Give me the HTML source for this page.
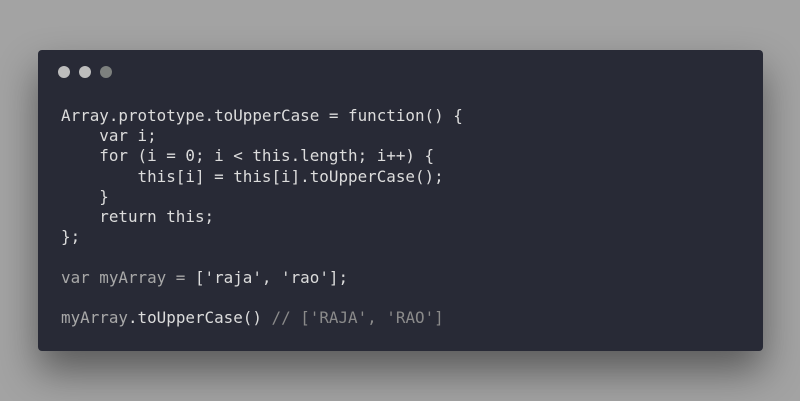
<!DOCTYPE html>
<html><head><style>
html,body{margin:0;padding:0;}
body{width:800px;height:401px;background:#a3a3a3;position:relative;overflow:hidden;}
.card{position:absolute;left:38px;top:50px;width:725px;height:301px;background:#282a36;border-radius:4px;box-shadow:0 20px 40px rgba(0,0,0,0.45);}
.dot{position:absolute;top:66px;width:12px;height:12px;border-radius:50%;}
pre{position:absolute;left:61px;top:106px;margin:0;font-family:"DejaVu Sans Mono","Liberation Mono",monospace;font-size:15.9px;line-height:20.2px;color:#dcdcdc;}
.g{color:#a8a8a8}
.c{color:#8a8a8a}
</style></head><body>
<div class="card"></div>
<div class="dot" style="left:58px;background:#bdbdbd"></div>
<div class="dot" style="left:79px;background:#bdbdbd"></div>
<div class="dot" style="left:100px;background:#7d807e"></div>
<pre>Array.prototype.toUpperCase = function() {
    var i;
    for (i = 0; i &lt; this.length; i++) {
        this[i] = this[i].toUpperCase();
    }
    return this;
};

<span class="g">var myArray =</span> ['raja', 'rao'];

<span class="g">myArray</span>.toUpperCase() <span class="c">// ['RAJA', 'RAO']</span></pre>
</body></html>
